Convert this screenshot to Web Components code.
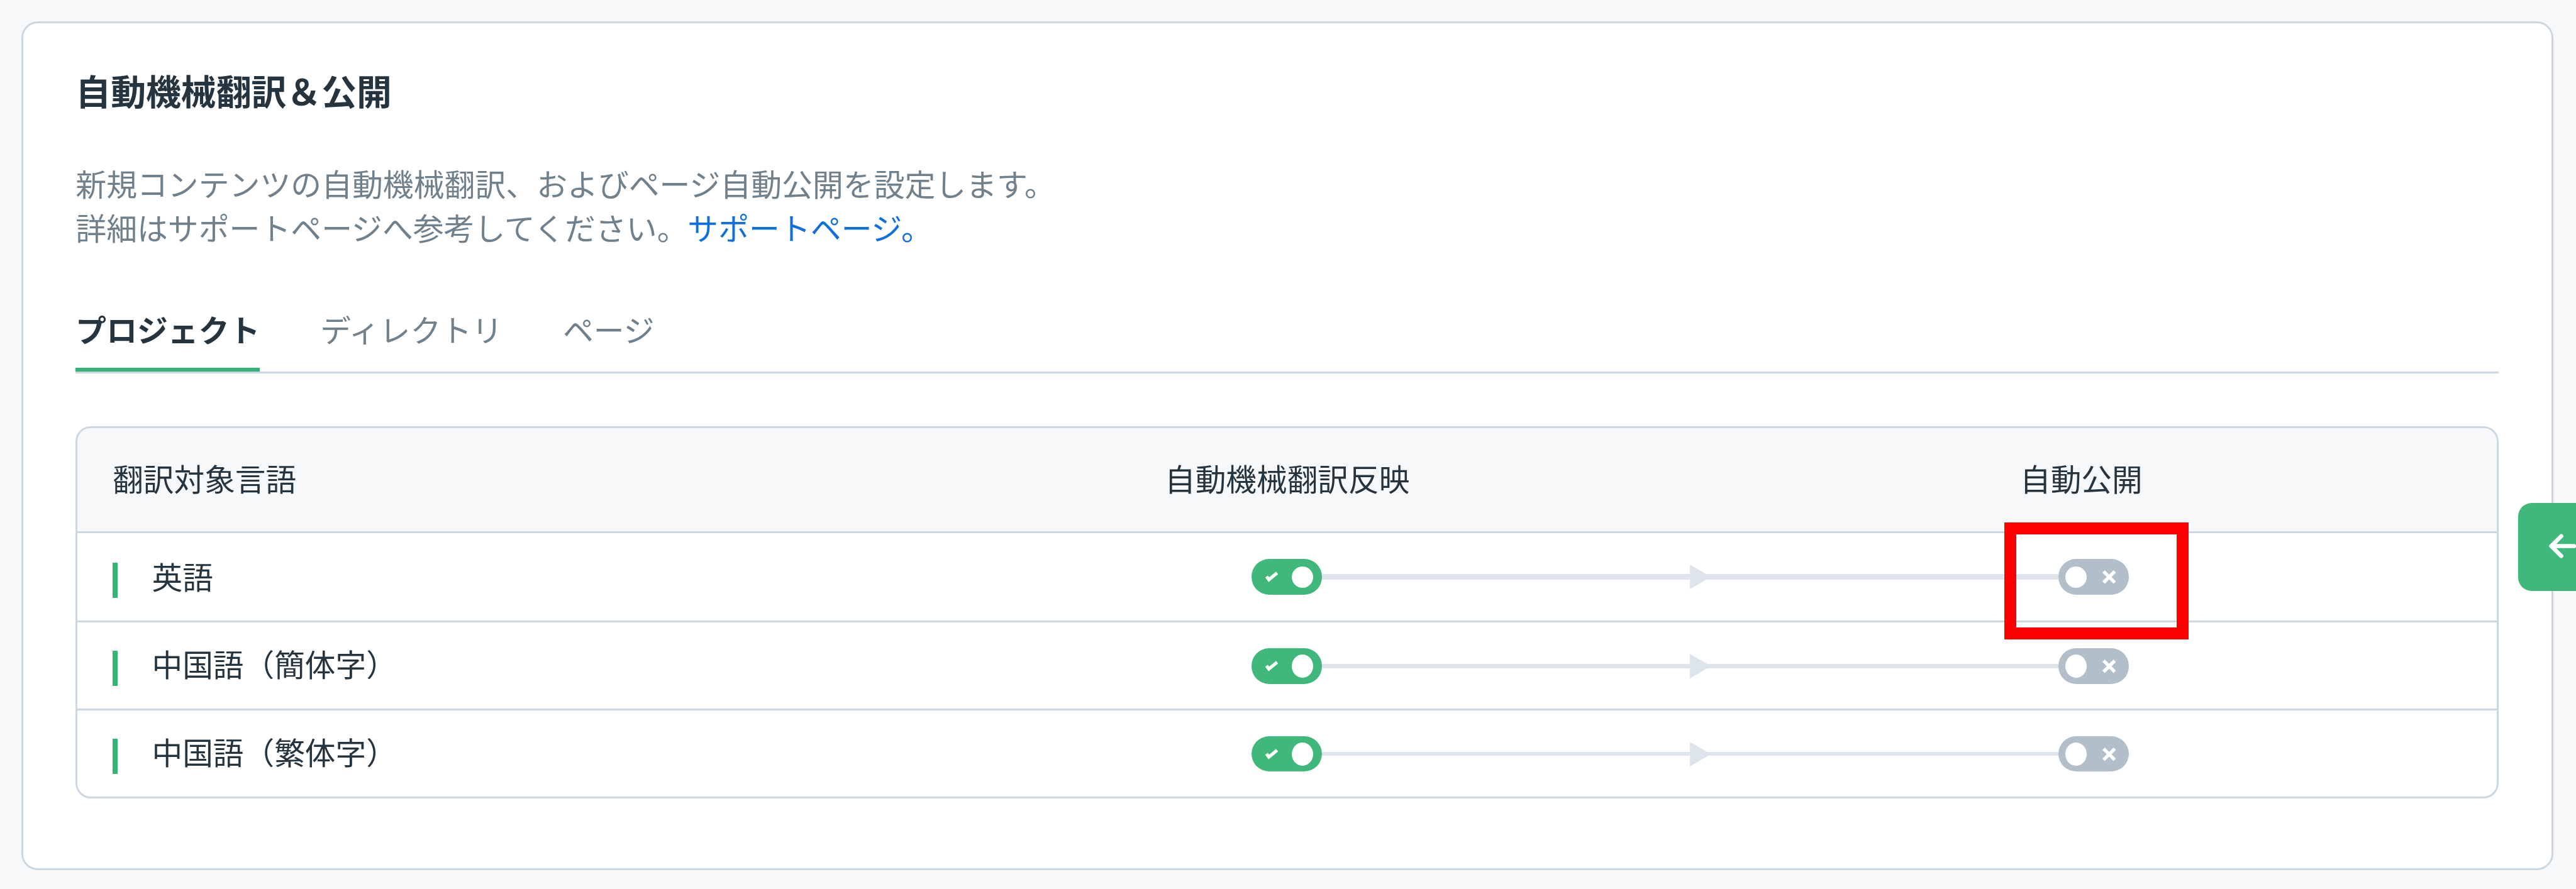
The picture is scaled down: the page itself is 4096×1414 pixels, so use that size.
<!DOCTYPE html>
<html lang="ja">
<head>
<meta charset="UTF-8">
<title>自動機械翻訳＆公開</title>
<style>
  /* 1rem is a 440th of the window's width */
  html {
    font-size: calc(100vw / 440);
  }

  body {
    --line: #cbd7e2;
    --surface: #f6f8fa;
    --green: #41b87b;
    --bar: #35b374;
    --off: #b2bec9;
    --flow: #dde4ec;
    --ink: #26343f;
    --muted: #70808c;
    --link: #0f6fdc;
    margin: 0;
    padding: 3.6rem 3.9rem 0 3.6rem;
    box-sizing: border-box;
    height: 100vh;
    overflow: hidden;
    position: relative;
    background: var(--surface);
    color: var(--ink);
    font-family: "Noto Sans CJK JP", sans-serif;
    font-size: 5.23rem;
    line-height: 7.5rem;
  }
</style>
</head>
<body>
  <settings-card>
    <span slot="title">自動機械翻訳＆公開</span>
    <span slot="description">新規コンテンツの自動機械翻訳、およびページ自動公開を設定します。<br>詳細はサポートページへ参考してください。<support-link>サポートページ。</support-link></span>
    <tab-bar>
      <tab-item active>プロジェクト</tab-item>
      <tab-item>ディレクトリ</tab-item>
      <tab-item>ページ</tab-item>
    </tab-bar>
    <language-table>
      <span slot="language">翻訳対象言語</span>
      <span slot="translate">自動機械翻訳反映</span>
      <span slot="publish">自動公開</span>
      <language-row class="first" highlight>英語</language-row>
      <language-row>中国語（簡体字）</language-row>
      <language-row class="last">中国語（繁体字）</language-row>
    </language-table>
  </settings-card>
  <side-handle></side-handle>

<script>
/**
 * Small base class: renders the template() of its subclass into a shadow root.
 */
class BaseElement extends HTMLElement {
  constructor() {
    super();
    this.attachShadow({ mode: 'open' });
  }

  connectedCallback() {
    this.shadowRoot.innerHTML = this.template();
  }
}

class SettingsCard extends BaseElement {
  template() {
    return `
      <style>
        :host {
          display: flex;
          flex-direction: column;
          box-sizing: border-box;
          height: 145.05rem;
          padding: 6.9rem 9rem 0;
          background: #fff;
          border: 3px solid var(--line);
          border-radius: 2.8rem;
        }
        h2 {
          margin: 0 0 7.65rem;
          font-size: 6rem;
          line-height: 9rem;
          font-weight: 700;
        }
        p {
          margin: 0 0 9.95rem;
          color: var(--muted);
          font-size: 5.25rem;
        }
      </style>
      <h2><slot name="title"></slot></h2>
      <p><slot name="description"></slot></p>
      <slot></slot>
    `;
  }
}

class SupportLink extends BaseElement {
  template() {
    return `
      <style>
        :host { display: inline; margin-left: -1.2rem; color: var(--link); }
      </style>
      <slot></slot>
    `;
  }
}

class TabBar extends BaseElement {
  template() {
    return `
      <style>
        :host {
          display: flex;
          gap: 10.3rem;
          border-bottom: 3px solid var(--line);
          margin-bottom: 8.95rem;
        }
      </style>
      <slot></slot>
    `;
  }
}

class TabItem extends BaseElement {
  template() {
    return `
      <style>
        :host {
          display: block;
          padding-bottom: 2.95rem;
          border-bottom: 6px solid transparent;
          color: var(--muted);
          font-size: 5.25rem;
        }
        :host([active]) {
          border-color: var(--bar);
          color: var(--ink);
          font-weight: 700;
        }
      </style>
      <slot></slot>
    `;
  }
}

class LanguageTable extends BaseElement {
  template() {
    return `
      <style>
        :host {
          display: block;
          border: 3px solid var(--line);
          border-radius: 2.6rem;
          overflow: hidden;
        }
        header {
          display: grid;
          grid-template-columns: 185.7rem 146.1rem 1fr;
          align-items: center;
          box-sizing: border-box;
          height: 18rem;
          padding: 0 0 .4rem;
          background: var(--surface);
          border-bottom: 3px solid var(--line);
        }
        .language { padding-left: 6rem; }
      </style>
      <header>
        <div class="language"><slot name="language"></slot></div>
        <div><slot name="translate"></slot></div>
        <div><slot name="publish"></slot></div>
      </header>
      <slot></slot>
    `;
  }
}

class LanguageRow extends BaseElement {
  template() {
    return `
      <style>
        :host {
          --knob: 4rem;
          --flow-size: .65rem;
          display: flex;
          align-items: center;
          position: relative;
          box-sizing: border-box;
          height: 15rem;
          padding-top: .25rem;
          border-bottom: 3px solid var(--line);
        }
        :host(.first) {
          --knob: 3.65rem;
          --flow-size: .95rem;
          height: 15.25rem;
          padding-top: 0;
        }
        :host(.last) {
          height: 14.7rem;
          border-bottom: 0;
        }
        .name {
          display: flex;
          align-items: center;
          box-sizing: border-box;
          width: 200.5rem;
          padding-left: 6rem;
          gap: 5.9rem;
        }
        .bar {
          width: .8rem;
          height: 6rem;
          margin-top: .8rem;
          background: var(--bar);
        }
        .label { margin-bottom: .7rem; }
        :host(.first) .bar { margin-top: 1.2rem; }
        :host(.first) .label { margin-bottom: .2rem; }
        flow-line { width: 125.8rem; }
        .mark {
          position: absolute;
          left: 329.1rem;
          top: -1.8rem;
          box-sizing: border-box;
          width: 31.5rem;
          height: 19.9rem;
          border: 2.1rem solid #f00;
          z-index: 1;
        }
      </style>
      <div class="name"><span class="bar"></span><span class="label"><slot></slot></span></div>
      <toggle-switch on></toggle-switch>
      <flow-line></flow-line>
      <toggle-switch></toggle-switch>
      ${this.hasAttribute('highlight') ? '<div class="mark"></div>' : ''}
    `;
  }

  connectedCallback() {
    super.connectedCallback();
    // the mark hangs over the rows above and below
    if (this.hasAttribute('highlight')) this.style.zIndex = 1;
  }
}

class ToggleSwitch extends BaseElement {
  template() {
    const icon = this.hasAttribute('on')
      ? '<svg class="check" viewBox="0 0 22 18"><path d="M2 8.5 L6 14 L20 2.5" stroke-width="5.6"/></svg>'
      : '<svg class="cross" viewBox="0 0 23 23"><path d="M2 2 L21 21 M21 2 L2 21" stroke-width="5.8"/></svg>';
    return `
      <style>
        :host {
          display: flex;
          align-items: center;
          justify-content: space-between;
          box-sizing: border-box;
          width: 12.05rem;
          height: 6.05rem;
          padding: 0 2.25rem 0 1.2rem;
          border-radius: 3rem;
          background: var(--off);
        }
        :host([on]) {
          flex-direction: row-reverse;
          padding: 0 1.55rem 0 2.35rem;
          background: var(--green);
        }
        .knob {
          width: 3.65rem;
          height: var(--knob);
          border-radius: 50%;
          background: #fff;
        }
        svg { display: block; fill: none; stroke: #fff; }
        .check { width: 2.2rem; height: 1.8rem; }
        .cross { width: 2.3rem; height: 2.3rem; }
      </style>
      <span class="knob"></span>${icon}
    `;
  }
}

class FlowLine extends BaseElement {
  template() {
    return `
      <style>
        :host { display: flex; align-items: center; }
        span {
          height: var(--flow-size);
          background: var(--flow);
        }
        .before { width: 62.9rem; }
        .after { flex: 1; margin-left: -.6rem; }
        svg {
          display: block;
          width: 3.6rem;
          height: 4.2rem;
          fill: var(--flow);
        }
      </style>
      <span class="before"></span>
      <svg viewBox="0 0 36 42"><path d="M0 0 L36 21 L0 42 Z"/></svg>
      <span class="after"></span>
    `;
  }
}

class SideHandle extends BaseElement {
  template() {
    return `
      <style>
        :host {
          position: absolute;
          right: 0;
          top: 85.95rem;
          display: flex;
          align-items: center;
          justify-content: flex-end;
          width: 9.9rem;
          height: 15.05rem;
          border-radius: 2.3rem 0 0 2.3rem;
          background: var(--green);
          z-index: 2;
        }
        svg {
          display: block;
          width: 4.6rem;
          height: 4.2rem;
          margin-top: -.3rem;
          fill: none;
          stroke: #fff;
          stroke-width: 7;
          stroke-linecap: round;
          stroke-linejoin: round;
        }
      </style>
      <svg viewBox="0 0 46 42"><path d="M21 4 L4 21 L21 38 M4 21 H43"/></svg>
    `;
  }
}

customElements.define('settings-card', SettingsCard);
customElements.define('support-link', SupportLink);
customElements.define('tab-bar', TabBar);
customElements.define('tab-item', TabItem);
customElements.define('language-table', LanguageTable);
customElements.define('language-row', LanguageRow);
customElements.define('toggle-switch', ToggleSwitch);
customElements.define('flow-line', FlowLine);
customElements.define('side-handle', SideHandle);
</script>
</body>
</html>
